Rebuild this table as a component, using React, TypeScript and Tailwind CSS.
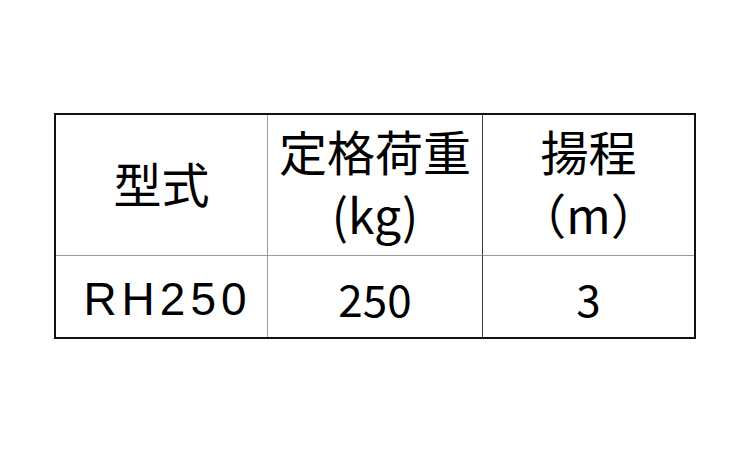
import React from "react";

const cjk = { fontFamily: '"Noto Sans CJK JP", "Noto Sans", sans-serif' };
const lat = { fontFamily: '"Liberation Sans", Arial, sans-serif' };

export default function App() {
  return (
    <div className="w-[750px] h-[450px] bg-white pt-[113px] pl-[54px]" style={cjk}>
      <div className="w-[642px] h-[226px] border-2 border-[#111] grid grid-cols-[212px_215px_211px] grid-rows-[141px_81px] text-black">
        <div className="border-r border-b border-[#9a9a9a] flex items-center justify-center pb-[6px] text-[48px] leading-none">
          型式
        </div>
        <div className="border-r border-b border-r-[#3a3a3a] border-b-[#9a9a9a] flex flex-col items-center justify-center pb-[6px] text-[48px] leading-[63px]">
          <span>定格荷重</span>
          <span>(kg)</span>
        </div>
        <div className="border-b border-[#9a9a9a] flex flex-col items-center justify-center pb-[6px] text-[48px] leading-[63px]">
          <span>揚程</span>
          <span>（m）</span>
        </div>
        <div className="border-r border-[#9a9a9a] flex items-center justify-center pt-[4px] pl-[12px]">
          <span className="text-[46px] leading-none tracking-[5px]" style={lat}>RH250</span>
        </div>
        <div className="border-r border-[#3a3a3a] flex items-center justify-center pt-[2px] text-[44px] leading-none">
          250
        </div>
        <div className="flex items-center justify-center pt-[2px] text-[44px] leading-none">
          3
        </div>
      </div>
    </div>
  );
}
